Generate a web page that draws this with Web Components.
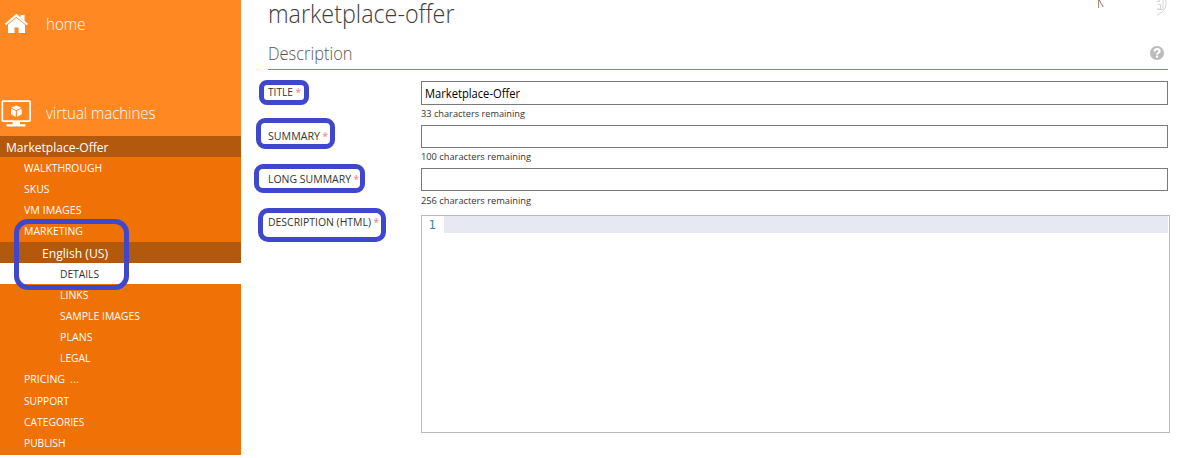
<!DOCTYPE html>
<html lang="en"><head><meta charset="utf-8"><title>Marketplace offer</title>
<style>
html,body{margin:0;background:#fff;font-family:"Open Sans","Noto Sans",sans-serif}
body{width:1194px;height:458px;overflow:hidden}
</style></head><body>
<offer-app></offer-app>
<script>
// Text run condensed horizontally to the width given in "w".
customElements.define('fit-text', class extends HTMLElement{
  connectedCallback(){
    const r=this.attachShadow({mode:'open'});
    r.innerHTML='<style>:host{display:inline-block;white-space:pre}span{display:inline-block;transform-origin:0 50%}</style><span><slot></slot></span>';
    const s=r.querySelector('span'), fit=()=>{
      s.style.transform='none';
      const w=+this.getAttribute('w'), n=s.offsetWidth;
      if(w&&n){s.style.transform='scaleX('+w/s.getBoundingClientRect().width+')';this.style.width=w+'px'}
    };
    fit();requestAnimationFrame(fit);
  }
});
customElements.define('nav-row', class extends HTMLElement{
  connectedCallback(){
    this.attachShadow({mode:'open'}).innerHTML=`<style>
    :host{display:flex;align-items:flex-start;box-sizing:border-box;height:21px;padding-left:24px;font-size:11px;line-height:21px;color:#fff}
    :host([tall]){height:22px}
    :host([level="3"]){padding-left:60px}
    :host([level="0"]){padding-left:6px;font-size:13px;line-height:23px;background:#b2590d}
    :host([level="2"]){padding-left:42px;font-size:13px;line-height:23px;background:#b2590d}
    :host([active]){background:#fff;color:#333}
    </style><slot></slot>`;
  }
});
customElements.define('nav-hub', class extends HTMLElement{
  connectedCallback(){
    this.attachShadow({mode:'open'}).innerHTML=`<style>
    :host{display:flex;align-items:center;color:#fff;font-size:16px;font-weight:300;line-height:22px}
    .i{width:45.5px;display:flex}
    </style><div class="i"><slot name="icon"></slot></div><slot></slot>`;
  }
});
customElements.define('side-bar', class extends HTMLElement{
  connectedCallback(){
    this.attachShadow({mode:'open'}).innerHTML=`<style>
    :host{display:block;width:241px;height:455px;background:#f07105}
    .top{height:136px;background:#ff8822;box-sizing:border-box;padding-top:9px;display:flex;flex-direction:column}
    nav-hub{height:30px} nav-hub+nav-hub{margin-top:59px}
    svg{display:block}
    </style>
    <div class="top">
    <nav-hub><svg slot="icon" width="34" height="30" viewBox="0 0 34 30"><path d="M5.500 15.500 16.300 6.300 27.300 15.500" fill="none" stroke="#fff" stroke-width="2.200"/><path d="M20.500 6h4v6l-4-3.500zM8 15.800l8.400-7L25 15.800V24h-6.500v-5.500h-4V24H8z" fill="#fff"/></svg><fit-text w="39.500">home</fit-text></nav-hub>
    <nav-hub><svg slot="icon" width="34" height="30" viewBox="0 0 34 30"><rect x="2.300" y="3.100" width="27.800" height="20" rx=".8" fill="none" stroke="#fff" stroke-width="1.700"/><path d="M12.500 23.700h7.500v2.500h5.500v2.400H6.500v-2.400h6z" fill="#fff"/><path d="m16.300 7.400 5 2.300-5 2.600-5-2.600zM11 10.500l4.800 2.600v5.900L11 16.300zM21.700 10.500l-4.800 2.600v5.900l4.800-2.700z" fill="#fff"/></svg><fit-text w="109.500">virtual machines</fit-text></nav-hub>
    </div>
    <nav-row level="0"><fit-text w="102.500">Marketplace-Offer</fit-text></nav-row>
    <nav-row><fit-text w="78">WALKTHROUGH</fit-text></nav-row>
    <nav-row><fit-text w="25.500">SKUS</fit-text></nav-row>
    <nav-row><fit-text w="57.500">VM IMAGES</fit-text></nav-row>
    <nav-row tall><fit-text w="59">MARKETING</fit-text></nav-row>
    <nav-row level="2"><fit-text w="66">English (US)</fit-text></nav-row>
    <nav-row level="3" active><fit-text w="39">DETAILS</fit-text></nav-row>
    <nav-row level="3"><fit-text w="28.500">LINKS</fit-text></nav-row>
    <nav-row level="3"><fit-text w="80">SAMPLE IMAGES</fit-text></nav-row>
    <nav-row level="3"><fit-text w="32.500">PLANS</fit-text></nav-row>
    <nav-row level="3"><fit-text w="30.500">LEGAL</fit-text></nav-row>
    <nav-row tall><fit-text w="41">PRICING</fit-text><fit-text w="9" style="margin-left:5px;opacity:.8">...</fit-text></nav-row>
    <nav-row><fit-text w="45">SUPPORT</fit-text></nav-row>
    <nav-row><fit-text w="60.500">CATEGORIES</fit-text></nav-row>
    <nav-row><fit-text w="41.500">PUBLISH</fit-text></nav-row>`;
  }
});
customElements.define('form-field', class extends HTMLElement{
  connectedCallback(){
    const a=n=>this.getAttribute(n)||'';
    this.attachShadow({mode:'open'}).innerHTML=`<style>
    :host{display:grid;grid-template-columns:153px 1fr;color:#333;font-size:11px}
    .label{display:flex;gap:3px;height:22px;line-height:22px;margin-left:-.5px}
    .star{color:#ff7474;font-size:10px}
    </style><div class="label"><fit-text w="${a('lw')}">${a('label')}</fit-text><span class="star">*</span></div><div><slot></slot></div>`;
  }
});
customElements.define('text-input', class extends HTMLElement{
  connectedCallback(){
    const a=n=>this.getAttribute(n)||'';
    this.attachShadow({mode:'open'}).innerHTML=`<style>
    :host{display:block;width:747px}
    .box{box-sizing:border-box;height:var(--h,23px);border:1px solid #7a7a7a;padding:1px 0 0 2.500px;font-size:12px;line-height:22px;color:#000}
    .hint{font-size:9.500px;line-height:14px;color:#333;margin-top:var(--g,2px);height:14px}
    .hint fit-text{display:block;margin-left:-.5px}
    </style><div class="box">${a('value')?`<fit-text w="${a('vw')}">${a('value')}</fit-text>`:''}</div><div class="hint"><fit-text w="${a('hw')}">${a('hint')}</fit-text></div>`;
  }
});
customElements.define('code-editor', class extends HTMLElement{
  connectedCallback(){
    this.attachShadow({mode:'open'}).innerHTML=`<style>
    :host{display:block;box-sizing:border-box;width:749px;height:218px;border:1px solid #bbb}
    .line{display:flex;height:17px;line-height:19px;font-family:"DejaVu Sans Mono",monospace;font-size:12px;color:#2b91a0}
    .n{width:22px;box-sizing:border-box;padding-left:6.500px} .b{width:724px;background:#e8e8f3}
    </style><div class="line"><div class="n">1</div><div class="b"></div></div>`;
  }
});
// Hand-drawn highlight frame laid over the page.
customElements.define('ink-frame', class extends HTMLElement{
  connectedCallback(){
    const [x,y,w,h,r]=this.getAttribute('box').split(' ').map(Number);
    this.attachShadow({mode:'open'}).innerHTML=`<style>
    :host{display:block;position:absolute;left:${x}px;top:${y}px;width:${w}px;height:${h}px;box-sizing:border-box;border:5px solid #3f48cc;border-radius:${r}px}
    </style>`;
  }
});
customElements.define('offer-app', class extends HTMLElement{
  connectedCallback(){
    this.attachShadow({mode:'open'}).innerHTML=`<style>
    :host{display:flex;position:relative;width:1194px;height:458px}
    main{padding-left:27px;width:902px}
    .title{height:31px;font-size:26px;line-height:26px;font-weight:300;color:#3c3c3c;display:flex;justify-content:space-between}
    .sub{height:39px;box-sizing:border-box;border-bottom:1px solid #e6730a;width:900px;display:flex;justify-content:space-between;font-size:18px;font-weight:300;color:#555;line-height:44px}
    .sub svg{margin:14.500px 4px 0 0}
    .user{width:70px;height:20px;margin-right:2px}
    form-field{height:43px}
    </style>
    <side-bar></side-bar>
    <main>
      <div class="title"><fit-text w="186.500">marketplace-offer</fit-text>
      <svg class="user" viewBox="0 0 70 20"><path d="M.6 0v8" stroke="#c08060" fill="none"/><path d="M1.200 0l4 7" stroke="#6078a0" fill="none"/><path d="M67.500 0c2 6-1.500 13-8.500 14.500M59 1.500h2.500v-1.500M59.500 4.500h3v4.500h-3.500M59 9.500h6v-9.500" stroke="#d5d5d5" fill="none"/></svg></div>
      <div class="sub"><fit-text w="84.500">Description</fit-text><svg width="14" height="14" viewBox="0 0 14 14"><circle cx="7" cy="7" r="7" fill="#bbb"/><path d="M4.500 5.400c0-3.200 5.100-3 5.100-.2C9.600 7 7 6.700 7 8.500M7 9.600v2.100" fill="none" stroke="#fff" stroke-width="2.100"/></svg></div>
      <form-field label="TITLE" lw="25" style="padding-top:11px;height:43px;box-sizing:border-box"><text-input value="Marketplace-Offer" vw="95" hint="33 characters remaining" hw="104" style="--h:24px"></text-input></form-field>
      <form-field label="SUMMARY" lw="52" style="margin-top:12px"><text-input hint="100 characters remaining" hw="110"></text-input></form-field>
      <form-field label="LONG SUMMARY" lw="83"><text-input hint="256 characters remaining" hw="110" style="--g:3px"></text-input></form-field>
      <form-field label="DESCRIPTION (HTML)" lw="103"><code-editor style="margin-top:4px"></code-editor></form-field>
    </main>
    <ink-frame box="14 219 115 71 14"></ink-frame>
    <ink-frame box="259 80 50 25 8"></ink-frame>
    <ink-frame box="256 118 79 31 9"></ink-frame>
    <ink-frame box="254 164 111 29 9"></ink-frame>
    <ink-frame box="258 208 128 34 10"></ink-frame>`;
  }
});
</script></body></html>
